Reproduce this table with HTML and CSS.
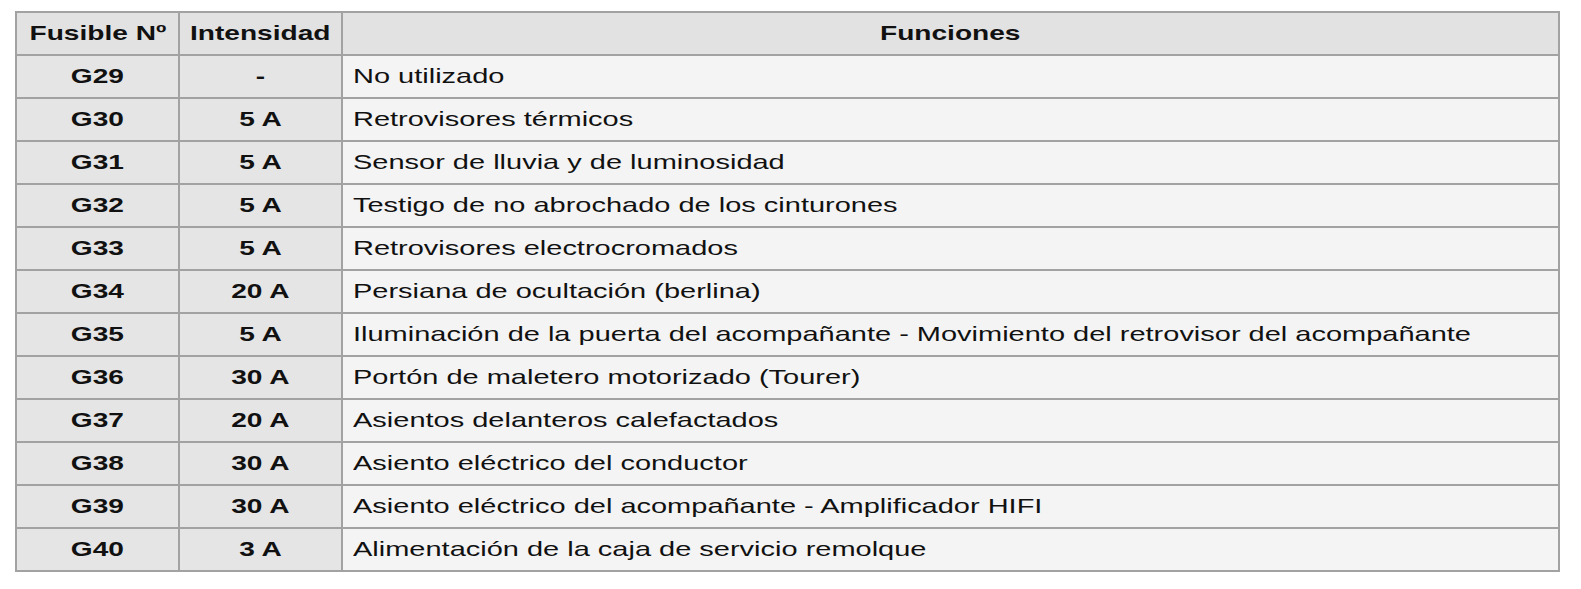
FILE: index.html
```html
<!DOCTYPE html>
<html lang="es">
<head>
<meta charset="utf-8">
<link rel="stylesheet" href="styles.css">
</head>
<body>
<table class="fuses">
  <colgroup><col class="c1"><col class="c2"><col class="c3"></colgroup>
  <thead>
    <tr><th><span class="w">Fusible Nº</span></th><th><span class="w">Intensidad</span></th><th><span class="w">Funciones</span></th></tr>
  </thead>
  <tbody>
    <tr><td class="k"><span class="w">G29</span></td><td class="k"><span class="w">-</span></td><td class="f"><span class="w">No utilizado</span></td></tr>
    <tr><td class="k"><span class="w">G30</span></td><td class="k"><span class="w">5 A</span></td><td class="f"><span class="w">Retrovisores térmicos</span></td></tr>
    <tr><td class="k"><span class="w">G31</span></td><td class="k"><span class="w">5 A</span></td><td class="f"><span class="w">Sensor de lluvia y de luminosidad</span></td></tr>
    <tr><td class="k"><span class="w">G32</span></td><td class="k"><span class="w">5 A</span></td><td class="f"><span class="w">Testigo de no abrochado de los cinturones</span></td></tr>
    <tr><td class="k"><span class="w">G33</span></td><td class="k"><span class="w">5 A</span></td><td class="f"><span class="w">Retrovisores electrocromados</span></td></tr>
    <tr><td class="k"><span class="w">G34</span></td><td class="k"><span class="w">20 A</span></td><td class="f"><span class="w">Persiana de ocultación (berlina)</span></td></tr>
    <tr><td class="k"><span class="w">G35</span></td><td class="k"><span class="w">5 A</span></td><td class="f"><span class="w">Iluminación de la puerta del acompañante - Movimiento del retrovisor del acompañante</span></td></tr>
    <tr><td class="k"><span class="w">G36</span></td><td class="k"><span class="w">30 A</span></td><td class="f"><span class="w">Portón de maletero motorizado (Tourer)</span></td></tr>
    <tr><td class="k"><span class="w">G37</span></td><td class="k"><span class="w">20 A</span></td><td class="f"><span class="w">Asientos delanteros calefactados</span></td></tr>
    <tr><td class="k"><span class="w">G38</span></td><td class="k"><span class="w">30 A</span></td><td class="f"><span class="w">Asiento eléctrico del conductor</span></td></tr>
    <tr><td class="k"><span class="w">G39</span></td><td class="k"><span class="w">30 A</span></td><td class="f"><span class="w">Asiento eléctrico del acompañante - Amplificador HIFI</span></td></tr>
    <tr><td class="k"><span class="w">G40</span></td><td class="k"><span class="w">3 A</span></td><td class="f"><span class="w">Alimentación de la caja de servicio remolque</span></td></tr>
  </tbody>
</table>
</body>
</html>
```

FILE: styles.css
```css
html, body {
  margin: 0;
  padding: 0;
  background: #ffffff;
}

body {
  padding: 11px 0 0 15px;
  font-family: "Liberation Sans", Arial, sans-serif;
  font-size: 20px;
  color: #111111;
}

.fuses {
  border-collapse: collapse;
  width: 1545px;
  table-layout: fixed;
  border: 2px solid #9e9e9e;
}

.c1 { width: 163px; }
.c2 { width: 163px; }

.fuses th,
.fuses td {
  border: 2px solid #a2a2a2;
  height: 39px;
  padding: 0 0 2px 0;
  vertical-align: middle;
  white-space: nowrap;
  overflow: hidden;
}

.fuses th {
  background: #e2e2e2;
  font-weight: bold;
  text-align: center;
  font-size: 20.5px;
}

.fuses td.k {
  background: #e5e5e5;
  font-weight: bold;
  text-align: center;
  font-size: 20.5px;
}

.fuses td.f {
  background: #f4f4f4;
  text-align: left;
  padding-left: 10px;
  font-size: 21px;
}

.w {
  display: inline-block;
  transform: scaleX(1.37);
  transform-origin: center;
}

.fuses td.f .w {
  transform: scaleX(1.38);
  transform-origin: left center;
}
```
